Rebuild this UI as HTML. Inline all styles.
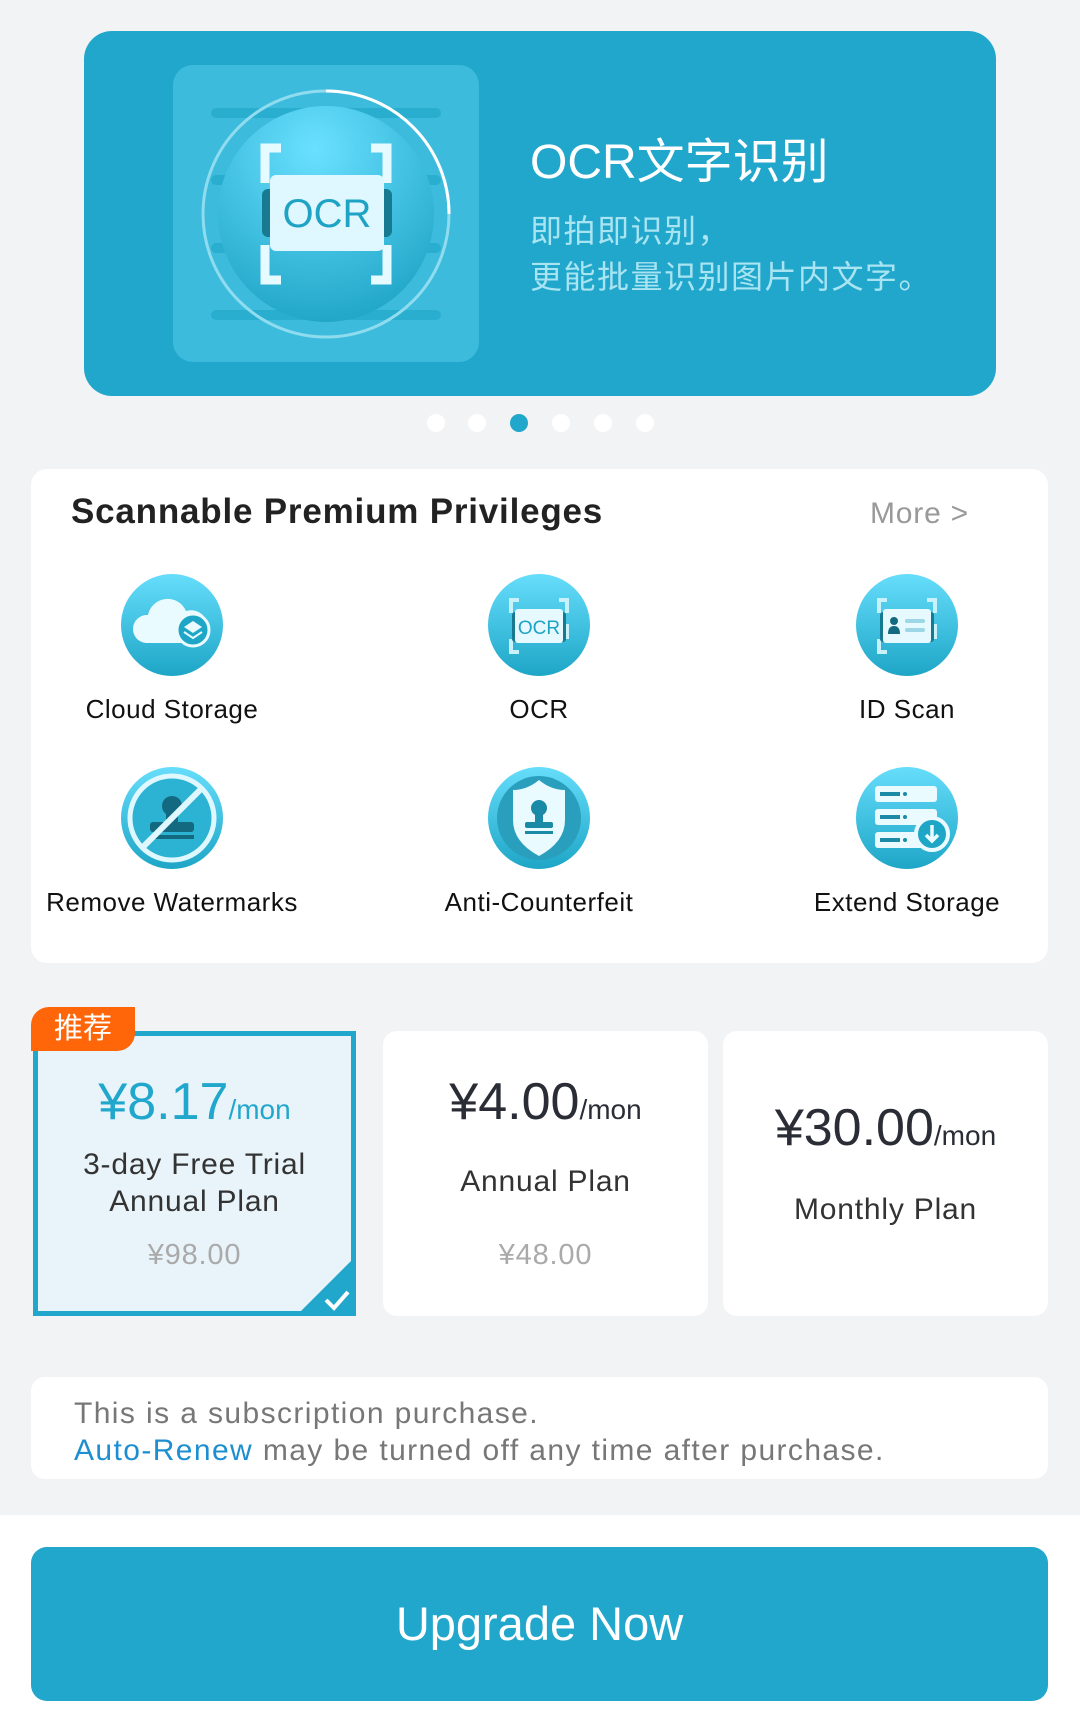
<!DOCTYPE html>
<html><head><meta charset="utf-8"><style>
*{margin:0;padding:0;box-sizing:border-box}
body{width:1080px;height:1732px;background:#f2f3f5;position:relative;overflow:hidden;font-family:"Liberation Sans","Noto Sans CJK SC",sans-serif}
.a{position:absolute}
.c{text-align:center;white-space:nowrap}
.dot{position:absolute;top:414px;width:18px;height:18px;border-radius:50%;background:#fff}
.ic{position:absolute;width:104px;height:104px}
.lbl{position:absolute;width:360px;text-align:center;font-size:26px;color:#111;letter-spacing:0.5px}
.card{position:absolute;top:1031px;height:285px;background:#fff;border-radius:14px}
</style></head><body>
<!-- banner -->
<div class="a" style="left:84px;top:31px;width:912px;height:365px;background:#21a7cb;border-radius:28px"></div>
<div class="a" style="left:173px;top:65px;width:306px;height:297px;background:#3dbbdd;border-radius:20px"></div>
<svg class="a" style="left:173px;top:65px" width="306" height="297" viewBox="0 0 306 297">
<defs><radialGradient id="bg1" cx="0.45" cy="0.2" r="0.8"><stop offset="0" stop-color="#6ae0ff"/><stop offset="1" stop-color="#22a7c9"/></radialGradient></defs>
<g fill="#2aaed0"><rect x="38" y="43" width="230" height="10" rx="5"/><rect x="38" y="110" width="230" height="10" rx="5"/><rect x="38" y="178" width="230" height="10" rx="5"/><rect x="38" y="245" width="230" height="10" rx="5"/></g>
<circle cx="153" cy="149" r="123" fill="none" stroke="#8fdcef" stroke-width="3"/>
<path d="M153 26 A123 123 0 0 1 276 149" fill="none" stroke="#fff" stroke-width="3"/>
<circle cx="153" cy="149" r="108" fill="url(#bg1)"/>
<g fill="none" stroke="#e6fbff" stroke-width="9"><path d="M92 118V83h16M214 118V83h-16M92 180v35h16M214 180v35h-16"/></g>
<rect x="89" y="124" width="130" height="48" rx="6" fill="#177a90"/>
<rect x="97" y="110" width="114" height="76" rx="6" fill="#dff7ff"/>
<text x="154" y="162" text-anchor="middle" font-family="Liberation Sans" font-size="40" fill="#1fa3c5">OCR</text>
</svg>
<div class="a" style="left:530px;top:122px;font-size:48px;color:#fff;white-space:nowrap">OCR文字识别</div>
<div class="a" style="left:530px;top:208px;font-size:32px;color:#a8e4f2;line-height:46px;white-space:nowrap;letter-spacing:1.5px">即拍即识别，<br>更能批量识别图片内文字。</div>
<div class="dot" style="left:427px"></div><div class="dot" style="left:468px"></div><div class="dot" style="left:510px;background:#21a7cb"></div><div class="dot" style="left:552px"></div><div class="dot" style="left:594px"></div><div class="dot" style="left:636px"></div>
<!-- privileges -->
<div class="a" style="left:31px;top:469px;width:1017px;height:494px;background:#fff;border-radius:16px"></div>
<div class="a" style="left:71px;top:492px;font-size:35px;font-weight:bold;color:#222;white-space:nowrap;letter-spacing:0.8px">Scannable Premium Privileges</div>
<div class="a" style="left:870px;top:497px;font-size:30px;color:#999;white-space:nowrap;letter-spacing:0.8px">More &gt;</div>
<svg width="0" height="0" style="position:absolute"><defs><linearGradient id="g" x1="0" y1="0" x2="0" y2="1"><stop offset="0" stop-color="#66ddfb"/><stop offset="1" stop-color="#1ea6c7"/></linearGradient></defs></svg>
<svg class="ic" style="left:120px;top:573px" viewBox="0 0 104 104"><circle cx="52" cy="52" r="51" fill="url(#g)"/><path d="M26 70a14 14 0 0 1 2-28a20 20 0 0 1 38-4a16 16 0 0 1 10 32z" fill="#eafbff"/><circle cx="73" cy="57" r="16" fill="#1ea6c7" stroke="#eafbff" stroke-width="3"/><path d="M73 48l9 6-9 6-9-6z" fill="#eafbff"/><path d="M64 59l9 6 9-6" fill="none" stroke="#eafbff" stroke-width="2"/></svg>
<svg class="ic" style="left:487px;top:573px" viewBox="0 0 104 104"><circle cx="52" cy="52" r="51" fill="url(#g)"/><g fill="none" stroke="#c9f1fb" stroke-width="4"><path d="M24 40V27h8M80 40V27h-8M24 66v13h8M80 66v-13h-8"/></g><rect x="25" y="39" width="54" height="30" rx="3" fill="#177a90"/><rect x="28" y="36" width="48" height="34" rx="3" fill="#e6f9ff"/><text x="52" y="61" text-anchor="middle" font-family="Liberation Sans" font-size="19" fill="#1fa3c5">OCR</text></svg>
<svg class="ic" style="left:855px;top:573px" viewBox="0 0 104 104"><circle cx="52" cy="52" r="51" fill="url(#g)"/><g fill="none" stroke="#c9f1fb" stroke-width="4"><path d="M24 40V27h8M80 40V27h-8M24 66v13h8M80 66v-13h-8"/></g><rect x="25" y="39" width="54" height="30" rx="3" fill="#177a90"/><rect x="28" y="36" width="48" height="34" rx="3" fill="#e6f9ff"/><circle cx="39" cy="48" r="4" fill="#136a80"/><path d="M33 61q0-8 6-8t6 8z" fill="#136a80"/><rect x="50" y="46" width="20" height="4" rx="2" fill="#9dd7e6"/><rect x="50" y="55" width="20" height="4" rx="2" fill="#9dd7e6"/></svg>
<svg class="ic" style="left:120px;top:766px" viewBox="0 0 104 104"><circle cx="52" cy="52" r="51" fill="url(#g)"/><circle cx="52" cy="52" r="42" fill="#2cb3d3" stroke="#dff8ff" stroke-width="5"/><circle cx="52" cy="40" r="10" fill="#136a80"/><rect x="46" y="44" width="12" height="14" fill="#136a80"/><rect x="30" y="56" width="44" height="10" rx="3" fill="#136a80"/><rect x="30" y="69" width="44" height="4" fill="#136a80"/><path d="M22 82L82 22" stroke="#dff8ff" stroke-width="6"/></svg>
<svg class="ic" style="left:487px;top:766px" viewBox="0 0 104 104"><circle cx="52" cy="52" r="51" fill="url(#g)"/><circle cx="52" cy="52" r="42" fill="#2a9fbd"/><path d="M52 14q12 10 26 10v30q0 22-26 36q-26-14-26-36V24q14 0 26-10z" fill="#eafbff"/><circle cx="52" cy="42" r="8" fill="#1a8aa6"/><rect x="48" y="46" width="8" height="10" fill="#1a8aa6"/><rect x="38" y="56" width="28" height="6" rx="2" fill="#1a8aa6"/><rect x="38" y="65" width="28" height="3" fill="#1a8aa6"/></svg>
<svg class="ic" style="left:855px;top:766px" viewBox="0 0 104 104"><circle cx="52" cy="52" r="51" fill="url(#g)"/><g fill="#eafbff"><rect x="20" y="20" width="62" height="16" rx="3"/><rect x="20" y="43" width="62" height="16" rx="3"/><rect x="20" y="66" width="62" height="16" rx="3"/></g><g fill="#1a8aa6"><rect x="25" y="26" width="20" height="4"/><rect x="25" y="49" width="20" height="4"/><rect x="25" y="72" width="20" height="4"/><circle cx="50" cy="28" r="2"/><circle cx="50" cy="51" r="2"/><circle cx="50" cy="74" r="2"/></g><circle cx="77" cy="68" r="16" fill="#1ea6c7" stroke="#eafbff" stroke-width="4"/><path d="M77 59v16M71 69l6 6 6-6" fill="none" stroke="#eafbff" stroke-width="3.5"/></svg>
<div class="lbl" style="left:-8px;top:694px">Cloud Storage</div>
<div class="lbl" style="left:359px;top:694px">OCR</div>
<div class="lbl" style="left:727px;top:694px">ID Scan</div>
<div class="lbl" style="left:-8px;top:887px">Remove Watermarks</div>
<div class="lbl" style="left:359px;top:887px">Anti-Counterfeit</div>
<div class="lbl" style="left:727px;top:887px">Extend Storage</div>
<!-- plans -->
<div class="a" style="left:33px;top:1031px;width:323px;height:285px;background:#e8f4fa;border:5px solid #21a7cb"></div>
<svg class="a" style="left:296px;top:1256px" width="60" height="60"><path d="M60 0V60H0z" fill="#21a7cb"/><path d="M30 44l8 8 14-16" fill="none" stroke="#fff" stroke-width="4"/></svg>
<div class="a c" style="left:31px;top:1007px;width:104px;height:44px;background:#ff660a;border-radius:18px 0 18px 0;color:#fff;font-size:29px;line-height:44px">推荐</div>
<div class="a c" style="left:33px;top:1072px;width:323px;color:#21a7cb;font-size:52px">¥8.17<span style="font-size:28px">/mon</span></div>
<div class="a c" style="left:33px;top:1146px;width:323px;color:#333;font-size:30px;line-height:37px;letter-spacing:0.8px">3-day Free Trial<br>Annual Plan</div>
<div class="a c" style="left:33px;top:1239px;width:323px;color:#aaa;font-size:29px;letter-spacing:0.8px">¥98.00</div>
<div class="card" style="left:383px;width:325px"></div>
<div class="a c" style="left:383px;top:1072px;width:325px;color:#2a2d36;font-size:52px">¥4.00<span style="font-size:28px">/mon</span></div>
<div class="a c" style="left:383px;top:1165px;width:325px;color:#333;font-size:30px;letter-spacing:0.8px">Annual Plan</div>
<div class="a c" style="left:383px;top:1239px;width:325px;color:#aaa;font-size:29px;letter-spacing:0.8px">¥48.00</div>
<div class="card" style="left:723px;width:325px"></div>
<div class="a c" style="left:723px;top:1098px;width:325px;color:#2a2d36;font-size:52px">¥30.00<span style="font-size:28px">/mon</span></div>
<div class="a c" style="left:723px;top:1193px;width:325px;color:#333;font-size:30px;letter-spacing:0.8px">Monthly Plan</div>
<!-- notice -->
<div class="a" style="left:31px;top:1377px;width:1017px;height:102px;background:#fff;border-radius:14px"></div>
<div class="a" style="left:74px;top:1395px;font-size:30px;color:#777;line-height:37px;white-space:nowrap;letter-spacing:1.4px">This is a subscription purchase.<br><span style="color:#1d8fd1">Auto-Renew</span> may be turned off any time after purchase.</div>
<!-- bottom -->
<div class="a" style="left:0;top:1515px;width:1080px;height:217px;background:#fff"></div>
<div class="a c" style="left:31px;top:1547px;width:1017px;height:154px;background:#21a7cb;border-radius:16px;color:#fff;font-size:47px;line-height:154px">Upgrade Now</div>
</body></html>
